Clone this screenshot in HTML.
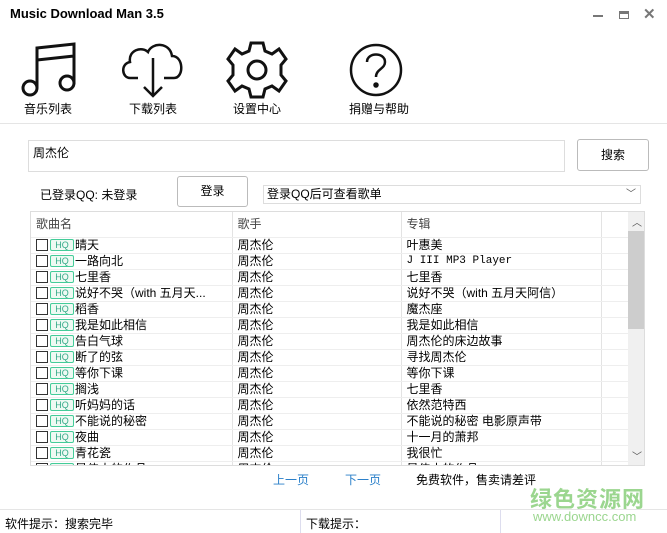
<!DOCTYPE html>
<html><head><meta charset="utf-8"><style>
*{margin:0;padding:0;box-sizing:border-box}
body{width:667px;height:533px;background:#fff;position:relative;overflow:hidden;font-family:"Liberation Sans","Noto Sans CJK SC",sans-serif;font-size:12px;color:#000}
.a{position:absolute}
.title{left:10px;top:6px;font-weight:bold;font-size:13px}
.nav{top:100px;font-size:12px}
.box{border:1px solid #ddd}
.btn{border:1px solid #bbb;border-radius:3px;text-align:center;background:#fff}
table{border-collapse:collapse;table-layout:fixed}
td{height:16px;line-height:15px;border-right:1px solid #e3e3e3;border-bottom:1px solid #eee;white-space:nowrap;overflow:hidden;padding-left:5px;font-size:12px}
.m{font-family:"Liberation Mono","Noto Sans CJK SC",monospace;font-size:11px}
.cb{display:inline-block;width:12px;height:12px;border:1px solid #333;vertical-align:top;margin-top:1px;margin-right:2px}
.hq{display:inline-block;width:24px;height:12px;border:1px solid #4c9;border-radius:2px;color:#3a8;font-size:9px;line-height:10px;text-align:center;vertical-align:top;margin-top:1px;margin-right:1px;background:#eefaf3}
</style></head><body>
<div class="a title">Music Download Man 3.5</div>
<div class="a" style="left:593px;top:15px;width:10px;height:2px;background:#777"></div>
<div class="a" style="left:619px;top:11px;width:10px;height:8px;border:1px solid #777;border-top:3px solid #777"></div>
<div class="a" style="left:643px;top:5px;font-size:15px;color:#777;font-weight:bold">✕</div>
<svg class="a" style="left:20px;top:40px" width="60" height="60" viewBox="0 0 60 60" fill="none" stroke="#111" stroke-width="3">
<path d="M17 48V8L54 4V44M17 20L54 16"/><circle cx="10" cy="48" r="7"/><circle cx="47" cy="43" r="7"/></svg>
<svg class="a" style="left:118px;top:40px" width="70" height="60" viewBox="0 0 70 60" fill="none" stroke="#111" stroke-width="2.5">
<path d="M20 38H12C4 38 2 24 12 22C10 10 24 6 30 12C34 2 52 2 54 16C66 16 66 38 56 38H46"/><path d="M35 18V56M26 47L35 56L44 47"/></svg>
<svg class="a" style="left:225px;top:40px" width="66" height="60" viewBox="0 0 66 60" fill="none" stroke="#111" stroke-width="3">
<path d="M26 3H38L40 11L47 14L54 9L61 19L56 25V35L61 41L54 51L47 46L40 49L38 57H26L24 49L17 46L10 51L3 41L8 35V25L3 19L10 9L17 14L24 11Z"/><circle cx="32" cy="30" r="9"/></svg>
<svg class="a" style="left:348px;top:42px" width="56" height="56" viewBox="0 0 56 56" fill="none" stroke="#111" stroke-width="2.5">
<circle cx="28" cy="28" r="25"/><path d="M19 20C19 10 37 10 37 20C37 27 28 27 28 35"/><circle cx="28" cy="43" r="1.5" fill="#111"/></svg>
<div class="a nav" style="left:24px">音乐列表</div>
<div class="a nav" style="left:129px">下载列表</div>
<div class="a nav" style="left:233px">设置中心</div>
<div class="a nav" style="left:349px">捐赠与帮助</div>
<div class="a" style="left:0;top:123px;width:667px;height:1px;background:#e5e5e5"></div>
<div class="a box" style="left:28px;top:140px;width:537px;height:32px;padding:3px 4px">周杰伦</div>
<div class="a btn" style="left:577px;top:139px;width:72px;height:32px;line-height:30px">搜索</div>
<div class="a" style="left:40px;top:186px">已登录QQ: 未登录</div>
<div class="a btn" style="left:177px;top:176px;width:71px;height:31px;line-height:29px">登录</div>
<div class="a box" style="left:263px;top:185px;width:378px;height:19px;padding-left:3px;line-height:17px">登录QQ后可查看歌单<span style="position:absolute;right:4px;color:#555;font-size:10px">﹀</span></div>
<div class="a box" style="left:30px;top:211px;width:615px;height:255px;overflow:hidden">
<table style="width:598px">
<colgroup><col style="width:201px"><col style="width:169px"><col style="width:200px"><col style="width:28px"></colgroup>
<tr><td style="height:25px;color:#444">歌曲名</td><td style="color:#444">歌手</td><td style="color:#444">专辑</td><td></td></tr>
<tr><td><span class="cb"></span><span class="hq">HQ</span>晴天</td><td>周杰伦</td><td>叶惠美</td><td></td></tr>
<tr><td><span class="cb"></span><span class="hq">HQ</span>一路向北</td><td>周杰伦</td><td class="m">J III MP3 Player</td><td></td></tr>
<tr><td><span class="cb"></span><span class="hq">HQ</span>七里香</td><td>周杰伦</td><td>七里香</td><td></td></tr>
<tr><td><span class="cb"></span><span class="hq">HQ</span>说好不哭（with 五月天...</td><td>周杰伦</td><td>说好不哭（with 五月天阿信）</td><td></td></tr>
<tr><td><span class="cb"></span><span class="hq">HQ</span>稻香</td><td>周杰伦</td><td>魔杰座</td><td></td></tr>
<tr><td><span class="cb"></span><span class="hq">HQ</span>我是如此相信</td><td>周杰伦</td><td>我是如此相信</td><td></td></tr>
<tr><td><span class="cb"></span><span class="hq">HQ</span>告白气球</td><td>周杰伦</td><td>周杰伦的床边故事</td><td></td></tr>
<tr><td><span class="cb"></span><span class="hq">HQ</span>断了的弦</td><td>周杰伦</td><td>寻找周杰伦</td><td></td></tr>
<tr><td><span class="cb"></span><span class="hq">HQ</span>等你下课</td><td>周杰伦</td><td>等你下课</td><td></td></tr>
<tr><td><span class="cb"></span><span class="hq">HQ</span>搁浅</td><td>周杰伦</td><td>七里香</td><td></td></tr>
<tr><td><span class="cb"></span><span class="hq">HQ</span>听妈妈的话</td><td>周杰伦</td><td>依然范特西</td><td></td></tr>
<tr><td><span class="cb"></span><span class="hq">HQ</span>不能说的秘密</td><td>周杰伦</td><td>不能说的秘密 电影原声带</td><td></td></tr>
<tr><td><span class="cb"></span><span class="hq">HQ</span>夜曲</td><td>周杰伦</td><td>十一月的萧邦</td><td></td></tr>
<tr><td><span class="cb"></span><span class="hq">HQ</span>青花瓷</td><td>周杰伦</td><td>我很忙</td><td></td></tr>
<tr><td><span class="cb"></span><span class="hq">HQ</span>最伟大的作品</td><td>周杰伦</td><td>最伟大的作品</td><td></td></tr>
</table>
<div class="a" style="left:597px;top:0;width:17px;height:253px;background:#f0f0f0"></div>
<div class="a" style="left:597px;top:19px;width:17px;height:98px;background:#cdcdcd"></div>
<div class="a" style="left:601px;top:2px;font-size:10px;color:#555">︿</div>
<div class="a" style="left:601px;top:236px;font-size:10px;color:#555">﹀</div>
</div>
<div class="a" style="left:273px;top:471px;color:#2a7fc9">上一页</div>
<div class="a" style="left:345px;top:471px;color:#2a7fc9">下一页</div>
<div class="a" style="left:416px;top:471px">免费软件，售卖请差评</div>
<div class="a" style="left:530px;top:482px;font-size:22px;font-weight:bold;color:#9bd68f;letter-spacing:1px">绿色资源网</div>
<div class="a" style="left:533px;top:509px;font-size:13px;color:#9bd68f">www.downcc.com</div>
<div class="a" style="left:0;top:509px;width:667px;height:1px;background:#e5e5e5"></div>
<div class="a" style="left:300px;top:510px;width:1px;height:23px;background:#dde"></div>
<div class="a" style="left:500px;top:510px;width:1px;height:23px;background:#dde"></div>
<div class="a" style="left:5px;top:515px">软件提示：搜索完毕</div>
<div class="a" style="left:306px;top:515px">下载提示：</div>
</body></html>
